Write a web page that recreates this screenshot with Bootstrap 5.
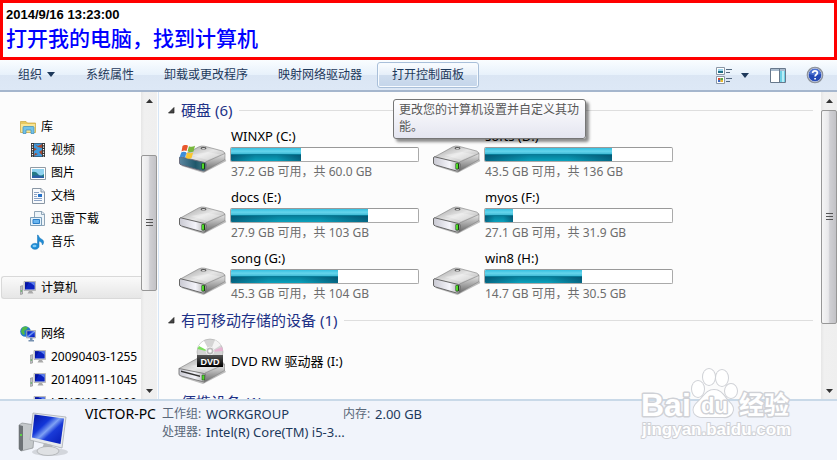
<!DOCTYPE html>
<html lang="zh-CN">
<head>
<meta charset="utf-8">
<meta name="viewport" content="width=device-width, initial-scale=1">
<title>计算机</title>
<link href="https://cdn.jsdelivr.net/npm/bootstrap@5.3.0/dist/css/bootstrap.min.css" rel="stylesheet">
<style>
body{font-family:"Noto Sans","Noto Sans CJK SC",sans-serif;font-size:12px;line-height:18px;color:#000;background:#fcfcfc}
.banner{border:3px solid #f00;background:#fff;padding:4px 3px;height:60px}
.banner time{font:bold 13px/16px "Liberation Sans",sans-serif}
.banner h1{font:500 21px/28px "Noto Sans CJK SC",sans-serif;color:#00f}
.toolbar{height:32px;padding:2px 13px 2px 3px;background:linear-gradient(#fafdff,#e7f1fb 50%,#dbe6f4 51%,#dde8f6);border-bottom:2px solid #a5b6cd}
.tool{font-size:12px;line-height:18px;color:#1e395b;padding:3px 14px;border:1px solid transparent;background:none;border-radius:3px;white-space:nowrap;height:26px}
.tool.hot{background:linear-gradient(#fbfdff,#e6eff9 48%,#cfddee 52%,#c4d5ea);border-color:#a9bfd9;box-shadow:inset 0 0 0 1px #f7fbff}
.view-tools{gap:20px}
.icon-tool{border:0;background:none;padding:0}
.tip{position:absolute;left:16px;top:37px;width:193px;z-index:5;padding:1px 5px 3px;line-height:17px;color:#575757;background:linear-gradient(#fff,#e4e5f0);border:1px solid #767676;border-radius:3px;box-shadow:3px 3px 3px rgba(0,0,0,.45)}
.middle{min-height:0}
.side{width:159px;border-right:1px solid #d6e5f5;padding-right:1px}
.tree{padding-top:23px;min-width:0}
.tree a{height:23px;display:flex;align-items:center;gap:5px;padding-left:20px;color:#000;text-decoration:none;white-space:nowrap}
.tree a.sub{padding-left:30px}
.tree a.sel{margin-left:1px;padding-left:18px;border:1px solid #d9d9d9;border-right:0;border-radius:3px 0 0 3px;background:linear-gradient(#fafafa,#e6e6e6)}
.gap-row{margin-top:23px}
.scroller{width:16px;flex:none;background:linear-gradient(90deg,#e6e6e6,#f0f0f0 20%,#efefef)}
.scroller button{height:17px;border:0;padding:0;background:none;display:flex;align-items:center;justify-content:center}
.thumb{border:1px solid #979797;border-radius:2px;background:linear-gradient(90deg,#f5f5f5,#e9e9eb 45%,#d0d0d4 55%,#c2c2c6);display:flex;align-items:center;justify-content:center}
.g46{flex:46}.g135{flex:135}.g92{flex:92}.g1{flex:1}.g214{flex:214}.g59{flex:59}
.content{padding:8px 8px 0 9px;min-width:0}
.group{height:20px;font-size:15px;line-height:20px;color:#1e3287;gap:7px}
.group button{border:0;background:none;padding:0;color:inherit;font-size:15px;line-height:20px;display:flex;align-items:center;gap:6px;white-space:nowrap}
.group hr{margin:0;flex:1;border:0;height:1px;background:#dedede;opacity:1}
.drives{display:grid;grid-template-columns:repeat(auto-fill,254px);grid-auto-rows:61px;padding:7px 0 0 10px}
.drive{display:flex;gap:3px;align-items:flex-start}
.drive>svg{flex:none;margin-top:17px}
.info{width:189px}
.label{font-size:13px;padding-left:1px}
.progress{height:15px;margin:2px 0 1px;border:1px solid #aaa;border-top-color:#999;border-radius:2px;background:#fff}
.progress-bar{background:linear-gradient(90deg,rgba(0,50,80,.5),transparent 35%,transparent 65%,rgba(0,50,80,.5)) 0 100%/100% 50% no-repeat,linear-gradient(#35bfe0,#65d5ec 25%,#3cb8d4 48%,#077b97 50%,#0aa2bd)}
.free{color:#6d6d6d;padding-left:1px}
.optical{height:62px;padding-left:10px;gap:3px}
.status{min-height:61px;background:#f1f4fb;border-top:2px solid #c9d9e8;padding:4px 18px 0}
.status-icon{margin-top:7px}
.pc-name{font-size:14px;margin:0 6px 0 17px;white-space:nowrap}
.facts{display:grid;grid-template-columns:44px 137px 32px auto;color:#1e395b;line-height:18px}
.facts dt{font-weight:400;color:#5a6779}.facts dd{margin:0;white-space:nowrap;font-size:13px}
.wm{position:absolute;right:45px;bottom:7px;z-index:4;pointer-events:none}
</style>
<script src="https://cdn.jsdelivr.net/npm/bootstrap@5.3.0/dist/js/bootstrap.bundle.min.js"></script>
</head>
<body class="d-flex flex-column vh-100 overflow-hidden position-relative">
<svg width="0" height="0" class="position-absolute" aria-hidden="true">
<defs>
<linearGradient id="gTop" x1="0" y1="0" x2="1" y2="1"><stop offset="0" stop-color="#9c9c9c"/><stop offset=".5" stop-color="#e6e6e6"/><stop offset="1" stop-color="#a8a8a8"/></linearGradient>
<linearGradient id="gFront" x1="0" y1="0" x2="1" y2="0"><stop offset="0" stop-color="#c9c9d2"/><stop offset=".6" stop-color="#f4f4fa"/><stop offset="1" stop-color="#aaa"/></linearGradient>
<linearGradient id="gTeal" x1="0" y1="0" x2="1" y2="0"><stop offset="0" stop-color="#5b86a0"/><stop offset=".6" stop-color="#20586b"/><stop offset="1" stop-color="#48808a"/></linearGradient>
<linearGradient id="gSide" x1="0" y1="0" x2="0" y2="1"><stop offset="0" stop-color="#e6e6e6"/><stop offset="1" stop-color="#666"/></linearGradient>
<linearGradient id="gScr" x1="0" y1="0" x2="1" y2="1"><stop offset="0" stop-color="#0414a0"/><stop offset=".35" stop-color="#1236d8"/><stop offset=".5" stop-color="#7fa2f4"/><stop offset=".62" stop-color="#1a3bd8"/><stop offset="1" stop-color="#0418b0"/></linearGradient>
<linearGradient id="gBlk" x1="0" y1="0" x2="0" y2="1"><stop offset="0" stop-color="#555"/><stop offset="1" stop-color="#000"/></linearGradient>
</defs>
<symbol id="body" viewBox="0 0 48 28">
<path d="M3 21 25 28 48 16 46 13Z" fill="#000" opacity=".25"/>
<path d="M1 12.500 20 2Q23 .5 26 1.200L44 6Q47.500 7.500 46 10L28 19 2 14Z" fill="url(#gTop)" stroke="#7a7a7a" stroke-width=".6"/>
<path d="M27 17 46.500 8.500V14.500L26 26.500Z" fill="url(#gSide)" stroke="#777" stroke-width=".5"/>
<path d="M29 7 42 9.500 29 15 12 10Z" fill="#fff" opacity=".3"/>
<ellipse cx="25" cy="3.200" rx="3" ry="1.200" fill="#555"/><ellipse cx="25" cy="3.600" rx="1.800" ry=".6" fill="#ddd"/>
</symbol>
<symbol id="hdd" viewBox="0 0 48 28"><use href="#body" width="48" height="28"/>
<path d="M1 12.500Q1 11.500 3 12L26 17.500Q28 18 27.700 20L27 25Q26.500 26.500 24 26L3 20Q1 19.500 1 18Z" fill="url(#gFront)" stroke="#666" stroke-width="1"/>
<rect x="23" y="18" width="3.500" height="6.500" rx="1" fill="#173c12"/><rect x="23.500" y="18.500" width="2" height="5.200" fill="#4fd928"/></symbol>
<symbol id="sys" viewBox="0 0 48 28"><use href="#body" width="48" height="28"/>
<path d="M1 12.500Q1 11.500 3 12L26 17.500Q28 18 27.700 20L27 25Q26.500 26.500 24 26L3 20Q1 19.500 1 18Z" fill="url(#gTeal)" stroke="#667" stroke-width=".9"/>
<rect x="23" y="18" width="3.500" height="6.500" rx="1" fill="#173c12"/><rect x="23.500" y="18.500" width="2" height="5.200" fill="#4fd928"/>
<path d="M4 1Q7-1 9.500 .8L8 6Q5.500 5 3 6.500Z" fill="#e8572c"/><path d="M10.500 1.200Q13 2.500 16.500 .8L15 6.500Q12 8 9 6.300Z" fill="#79b83d"/><path d="M2.700 7.500Q5 6 7.800 7.300L6.500 12.500Q4 11 1 12.500Z" fill="#3c8edb"/><path d="M8.700 7.500Q12 9 14.700 7.500L13 13Q10 14.500 7.200 12.800Z" fill="#fbc62d"/></symbol>
<symbol id="pc" viewBox="0 0 16 16"><path d="M0 6.500 2.500 5.500V14L.5 14.500Z" fill="#bcc0c4" stroke="#777" stroke-width=".5"/><path d="M4 1.500H15.500V10.500H4Z" fill="#d9dce0" stroke="#999" stroke-width=".6"/><path d="M5 2.300H14.700V9.500H5Z" fill="#0a22c0"/><path d="M5 2.300H9L5 9.500Z" fill="#0414a0"/><path d="M10 2.300H14.700V6Z" fill="#5c80ec"/><path d="M9 11H12L13.500 13.500H7.500Z" fill="#aaa"/><path d="M.7 11H2" stroke="#3a3" stroke-width="1"/></symbol>
</svg>

<header class="banner flex-shrink-0"><time class="d-block">2014/9/16 13:23:00</time><h1 class="m-0">打开我的电脑，找到计算机</h1></header>

<nav class="toolbar d-flex align-items-center flex-shrink-0" aria-label="工具栏">
<button class="tool d-flex align-items-center gap-1">组织<svg width="10" height="6"><path d="M1 0H9L5 5Z" fill="#1e395b"/></svg></button>
<button class="tool">系统属性</button><button class="tool">卸载或更改程序</button><button class="tool">映射网络驱动器</button>
<div class="position-relative"><button class="tool hot d-block" aria-describedby="tip">打开控制面板</button><div class="tip" id="tip" role="tooltip">更改您的计算机设置并自定义其功能。</div></div>
<div class="view-tools d-flex align-items-center ms-auto">
<button class="icon-tool d-flex align-items-center" aria-label="更改视图"><svg width="34" height="17"><g fill="#fff" stroke="#8b97a5"><path d="M.5 .5H8.500V7.500H.5ZM.5 9.500H8.500V16.500H.5Z"/></g><path d="M2 2H7V4H2Z" fill="#9bd4ec"/><path d="M2 4H7V6H2Z" fill="#1d6d85"/><path d="M2 11H4.500V13H2Z" fill="#d54a31"/><path d="M4.500 11H7V13H4.500Z" fill="#5aa33c"/><path d="M2 13H4.500V15H2Z" fill="#3b66c4"/><path d="M4.500 13H7V15H4.500Z" fill="#e7b92e"/><path d="M10 2.500H16M10 5.500H14M10 11.500H16M10 14.500H14" stroke="#52677f"/><path d="M25 6H33L29 11Z" fill="#1e395b"/></svg></button>
<button class="icon-tool d-flex" aria-label="显示预览窗格"><svg width="16" height="15"><path d="M.5 .5H15.500V14.500H.5Z" fill="#fff" stroke="#67788c"/><path d="M1 1H15V3H1Z" fill="#a9bbce"/><path d="M10 3H15V14H10Z" fill="#6fcfe5"/><path d="M12 3H14V14H12Z" fill="#b9eef7"/><path d="M9.500 1V14" stroke="#67788c"/></svg></button>
<button class="icon-tool d-flex" aria-label="帮助"><svg width="18" height="18" viewBox="0 0 18 18"><circle cx="9" cy="9" r="7.600" fill="#2449b5" stroke="#8d929a" stroke-width="1.500"/><circle cx="9" cy="9" r="6.700" fill="none" stroke="#dfe5f0" stroke-width=".7"/><path d="M3 8Q4 3 9 3T15 8Q9 10 3 8Z" fill="#6c91e4" opacity=".6"/><path d="M6.600 7Q6.800 4.800 9 4.800T11.400 6.800C11.400 8.500 9.200 8.500 9.100 10.500M9.100 12V13.500" fill="none" stroke="#fff" stroke-width="1.700"/></svg></button>
</div>
</nav>

<div class="middle d-flex flex-grow-1 overflow-hidden">
<aside class="side d-flex flex-shrink-0 overflow-hidden">
<nav class="tree flex-grow-1 overflow-hidden" aria-label="导航窗格">
<a href="#"><svg width="16" height="16"><path d="M.5 2.500H6L7.500 4H15.500V13.500H.5Z" fill="#e8c95f" stroke="#c9a53d" stroke-width=".7"/><path d="M1 5H15V13H1Z" fill="#f8e596"/><path d="M3 8.500Q3 7.500 4 7.500H13Q14 7.500 14 8.500V14.500H11V11H6V14.500H3Z" fill="#74c2e8" stroke="#3a8dbb" stroke-width=".7"/></svg>库</a>
<a href="#" class="sub"><svg width="16" height="16"><path d="M1 1H15V15H1Z" fill="#333"/><path d="M4 1.500H12V14.500H4Z" fill="#3c9be0"/><path d="M4 2 8 4 12 2V6L8 5ZM4 9 7 7 4 6ZM12 8 9 10 12 13ZM4 14 8 12 5 11Z" fill="#a5492f"/><path d="M2.500 2V15M13.500 2V15" stroke="#fff" stroke-width="1.200" stroke-dasharray="1.200 1.300"/></svg>视频</a>
<a href="#" class="sub"><svg width="16" height="16"><path d="M.5 2.500H15.500V14.500H.5Z" fill="#fff" stroke="#919ba4"/><path d="M2 4H14V13H2Z" fill="#8fd2ef"/><path d="M2 7Q6 6 8 9T14 9V13H2Z" fill="#237a86"/><path d="M2 11Q8 9 14 12V13H2Z" fill="#2a5fa6"/></svg>图片</a>
<a href="#" class="sub"><svg width="16" height="16"><path d="M2.500 .5H11L14.500 4V15.500H2.500Z" fill="#f8fafc" stroke="#8996a4"/><path d="M11 .5V4H14.500" fill="#dfe7ef" stroke="#8996a4"/><path d="M4 4.500H9M4 6.500H7M4 8.500H7M4 10.500H12M4 12.500H12" stroke="#8aa2c4"/><path d="M8 6H12V9H8Z" fill="#2671c8"/></svg>文档</a>
<a href="#" class="sub"><svg width="16" height="16"><path d="M4.500 .5H12L14.500 3V14.500H4.500Z" fill="#edf4f9" stroke="#8fa5b7"/><path d="M11.500 .5V3.500H14.500" fill="none" stroke="#8fa5b7"/><path d="M.5 6.500H11.500V14.500H.5Z" fill="#e5f2fb" stroke="#7b9db8"/><path d="M3 8.500H9.500V12.500H3Z" fill="#69b5ef" stroke="#2a7dc7"/></svg>迅雷下载</a>
<a href="#" class="sub"><svg width="16" height="16"><path d="M8 1Q9 4 12 5.500T12.500 11Q12.500 8 9 7V12.500A4 3 0 1 1 7.500 10V1Z" fill="#1e8bd4" stroke="#1470b4" stroke-width=".5"/><ellipse cx="4.500" cy="12" rx="2" ry="1.200" fill="#7fcaf5"/></svg>音乐</a>
<a href="#" class="sel gap-row" aria-current="page"><svg width="16" height="16"><use href="#pc"/></svg>计算机</a>
<a href="#" class="gap-row"><svg width="16" height="16"><circle cx="5.500" cy="5.500" r="5.300" fill="#2478cc"/><path d="M2 2Q5-.5 8 1.500L6 4 4 5 5 8 3 9 1 6Z" fill="#4fb84a"/><path d="M6.500 4.500H15.500V12H6.500Z" fill="#cfd5dc" stroke="#888" stroke-width=".5"/><path d="M7.200 5.200H14.800V11.200H7.200Z" fill="url(#gScr)"/><path d="M10 12H12.500V14H14V15.500H8.500V14H10Z" fill="#7590b0"/></svg>网络</a>
<a href="#" class="sub"><svg class="flex-shrink-0" width="16" height="16"><use href="#pc"/></svg>20090403-1255</a>
<a href="#" class="sub"><svg class="flex-shrink-0" width="16" height="16"><use href="#pc"/></svg>20140911-1045</a>
<a href="#" class="sub"><svg class="flex-shrink-0" width="16" height="16"><use href="#pc"/></svg>LENOVO-20100</a>
</nav>
<div class="scroller d-flex flex-column">
<button aria-label="向上滚动"><svg width="7" height="4"><path d="M0 4H7L3.500 0Z" fill="#333"/></svg></button><div class="g46"></div>
<div class="thumb g135"><svg width="7" height="8"><path d="M0 .5H7M0 3.500H7M0 6.500H7" stroke="#555"/></svg></div><div class="g92"></div>
<button aria-label="向下滚动"><svg width="7" height="4"><path d="M0 0H7L3.500 4Z" fill="#333"/></svg></button></div>
</aside>

<main class="content flex-grow-1 overflow-hidden">
<div class="group d-flex align-items-center"><button><svg width="7" height="7"><path d="M6 .5V6H.5Z" fill="#444" stroke="#222" stroke-width=".7"/></svg>硬盘 (6)</button><hr></div>
<section class="drives" aria-label="硬盘">
<div class="drive"><svg width="49" height="29" viewBox="0 -1 48 29"><use href="#sys" width="48" height="28"/></svg><div class="info"><div class="label">WINXP (C:)</div><div class="progress"><div class="progress-bar" style="width:37.500%"></div></div><div class="free">37.2 GB 可用，共 60.0 GB</div></div></div>
<div class="drive"><svg width="49" height="29" viewBox="0 -1 48 29"><use href="#hdd" width="48" height="28"/></svg><div class="info"><div class="label">softs (D:)</div><div class="progress"><div class="progress-bar" style="width:68%"></div></div><div class="free">43.5 GB 可用，共 136 GB</div></div></div>
<div class="drive"><svg width="49" height="29" viewBox="0 -1 48 29"><use href="#hdd" width="48" height="28"/></svg><div class="info"><div class="label">docs (E:)</div><div class="progress"><div class="progress-bar" style="width:73%"></div></div><div class="free">27.9 GB 可用，共 103 GB</div></div></div>
<div class="drive"><svg width="49" height="29" viewBox="0 -1 48 29"><use href="#hdd" width="48" height="28"/></svg><div class="info"><div class="label">myos (F:)</div><div class="progress"><div class="progress-bar" style="width:15%"></div></div><div class="free">27.1 GB 可用，共 31.9 GB</div></div></div>
<div class="drive"><svg width="49" height="29" viewBox="0 -1 48 29"><use href="#hdd" width="48" height="28"/></svg><div class="info"><div class="label">song (G:)</div><div class="progress"><div class="progress-bar" style="width:57%"></div></div><div class="free">45.3 GB 可用，共 104 GB</div></div></div>
<div class="drive"><svg width="49" height="29" viewBox="0 -1 48 29"><use href="#hdd" width="48" height="28"/></svg><div class="info"><div class="label">win8 (H:)</div><div class="progress"><div class="progress-bar" style="width:52%"></div></div><div class="free">14.7 GB 可用，共 30.5 GB</div></div></div>
</section>
<div class="group d-flex align-items-center"><button><svg width="7" height="7"><path d="M6 .5V6H.5Z" fill="#444" stroke="#222" stroke-width=".7"/></svg>有可移动存储的设备 (1)</button><hr></div>
<div class="optical d-flex align-items-center"><svg width="49" height="47" viewBox="0 0 49 47"><use href="#body" y="18" width="48" height="28"/><path d="M1 30.500 26 35.500Q28 36 27.700 38L26 44 3 38Q1 37.500 1 36Z" fill="url(#gFront)" stroke="#777" stroke-width=".9"/><path d="M3 32.500 22 37.500V39L3 34Z" fill="#333"/><path d="M24 37H26.500V42H24Z" fill="#4fd928" stroke="#173c12" stroke-width=".5"/><circle cx="32" cy="14" r="13" fill="#d4d4d4" stroke="#aaa" stroke-width=".6"/><path d="M32 14 20 9Q23 4 26 3Z" fill="#fff"/><path d="M32 14 19.500 11 21 8Z" fill="#7be05c"/><path d="M32 14 44 9 45 13Z" fill="#e7b2d2"/><path d="M32 14 37 2Q41 4 43 7Z" fill="#f4f4f4"/><circle cx="32" cy="13" r="4" fill="#bbb" stroke="#eee"/><circle cx="32" cy="13" r="1.800" fill="#fff"/><path d="M19 17H45V29H19Z" fill="url(#gBlk)"/><text x="32" y="27" text-anchor="middle" font-family="Liberation Sans, sans-serif" font-weight="bold" font-size="9" fill="#fff">DVD</text></svg><span class="label">DVD RW 驱动器 (I:)</span></div>
<div class="group d-flex align-items-center"><button><svg width="7" height="7"><path d="M6 .5V6H.5Z" fill="#444" stroke="#222" stroke-width=".7"/></svg>便携设备 (1)</button><hr></div>
</main>
<div class="scroller d-flex flex-column">
<button aria-label="向上滚动"><svg width="7" height="4"><path d="M0 4H7L3.500 0Z" fill="#333"/></svg></button><div class="g1"></div>
<div class="thumb g214"><svg width="7" height="8"><path d="M0 .5H7M0 3.500H7M0 6.500H7" stroke="#555"/></svg></div><div class="g59"></div>
<button aria-label="向下滚动"><svg width="7" height="4"><path d="M0 0H7L3.500 4Z" fill="#333"/></svg></button></div>
</div>

<footer class="status d-flex flex-shrink-0 align-items-start">
<svg class="status-icon flex-shrink-0" width="50" height="46" viewBox="0 0 50 46"><ellipse cx="32" cy="40" rx="18" ry="4" fill="#000" opacity=".12"/><path d="M1 13 4 11 17 13 15 36 3 39 1 37Z" fill="#c4c8cb" stroke="#8c9093" stroke-width=".7"/><path d="M1 13 5 14V38L3 39 1 37Z" fill="#6d7276"/><path d="M2 22H4V24H2Z" fill="#5ad145"/><path d="M15 1 48 5 44 36 12 28Z" fill="#e6e9ec" stroke="#a0a5aa" stroke-width=".7"/><path d="M16.500 2.500 46 6.500 42.500 32 14 25.500Z" fill="url(#gScr)"/><path d="M26 31 34 33 35 37H24Z" fill="#b5b8bb"/><ellipse cx="30" cy="39" rx="11" ry="4.500" fill="#dfe1e4" stroke="#a5a8ab" stroke-width=".7"/></svg>
<div class="pc-name">VICTOR-PC</div>
<dl class="facts mb-0"><dt>工作组:</dt><dd>WORKGROUP</dd><dt>内存:</dt><dd>2.00 GB</dd><dt>处理器:</dt><dd>Intel(R) Core(TM) i5-3...</dd></dl>
</footer>

<svg class="wm" width="152" height="86" viewBox="0 0 152 86" font-family="Liberation Sans, Noto Sans CJK SC, sans-serif" font-weight="bold" fill="#fff" stroke="#cfd1d6" stroke-width="3" paint-order="stroke" stroke-linejoin="round">
<text x="1" y="49" font-size="32">Bai</text>
<g stroke-width="2"><ellipse cx="58" cy="22" rx="6" ry="8"/><ellipse cx="69" cy="10" rx="6" ry="8"/><ellipse cx="82" cy="11" rx="6" ry="8"/><ellipse cx="91" cy="24" rx="6" ry="7"/><path d="M74 23C82 23 84 30 89 35C98 43 90 51 83 50H64C55 51 49 43 58 35C64 30 66 23 74 23Z"/></g>
<text x="61" y="46" font-size="22">du</text><text x="99" y="47" font-size="25" font-family="Noto Sans CJK SC, sans-serif">经验</text>
<text x="2" y="68" font-size="17" stroke-width="2">jingyan.baidu.com</text></svg>
</body>
</html>
